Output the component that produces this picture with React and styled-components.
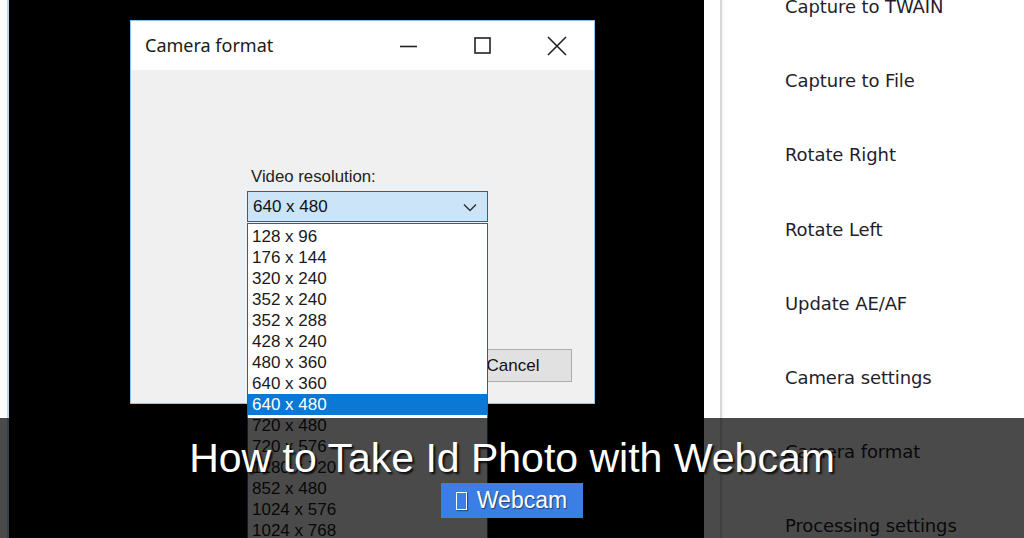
import React from 'react';
import styled, { createGlobalStyle } from 'styled-components';

const GlobalStyle = createGlobalStyle`
  html, body {
    margin: 0;
    padding: 0;
    background: #000;
    overflow: hidden;
  }
`;

const Screen = styled.div`
  position: relative;
  width: 1024px;
  height: 538px;
  display: flex;
  overflow: hidden;
  background: #000;
`;

const LeftEdge = styled.div`
  width: 7px;
  background: #fff;
  border-right: 2px solid #b9d6f0;
  flex-shrink: 0;
`;

const Stage = styled.div`
  flex: 1;
  background: #000;
  padding: 20px 0 0 121px;
`;

const Dialog = styled.div`
  position: relative;
  width: 463px;
  height: 382px;
  border: 1px solid #8fc3ea;
  background: #f0f0f0;
  display: flex;
  flex-direction: column;
`;

const TitleBar = styled.div`
  height: 49px;
  background: #fff;
  display: flex;
  align-items: center;
  padding-left: 14px;
  font-family: 'Noto Sans', 'Open Sans', sans-serif;
  font-size: 18px;
  color: #1a1a1a;
`;

const TitleText = styled.div`
  flex: 1;
  padding-bottom: 2px;
`;

const Controls = styled.div`
  display: flex;
  height: 100%;
`;

const ControlButton = styled.div`
  width: 74px;
  height: 100%;
  display: flex;
  align-items: center;
  justify-content: center;
`;

const Body = styled.div`
  flex: 1;
  padding: 97px 0 0 116px;
  position: relative;
`;

const Label = styled.div`
  font-family: 'Liberation Sans', Arial, sans-serif;
  font-size: 16.8px;
  color: #222;
  padding-left: 4px;
  margin-bottom: 4px;
`;

const ComboWrap = styled.div`
  position: relative;
  width: 241px;
`;

const Combo = styled.div`
  height: 31px;
  box-sizing: border-box;
  border: 1px solid #0a6cb8;
  background: #cce4f7;
  display: flex;
  align-items: center;
  justify-content: space-between;
  padding: 1px 10px 0 5px;
  font-family: 'Liberation Sans', Arial, sans-serif;
  font-size: 17px;
  color: #111;
`;

const List = styled.div`
  position: absolute;
  top: 32px;
  left: 0;
  width: 241px;
  box-sizing: border-box;
  border: 1px solid #0a6cb8;
  border-bottom: none;
  background: #fff;
  padding-top: 2px;
  z-index: 2;
`;

const Option = styled.div`
  height: 21px;
  line-height: 22px;
  padding-left: 4px;
  font-family: 'Liberation Sans', Arial, sans-serif;
  font-size: 17px;
  color: ${p => (p.$selected ? '#fff' : '#1a1a1a')};
  background: ${p => (p.$selected ? '#0a78d4' : 'transparent')};
`;

const CancelButton = styled.div`
  position: absolute;
  left: 323px;
  top: 279px;
  width: 118px;
  height: 33px;
  box-sizing: border-box;
  border: 1px solid #adadad;
  background: #e1e1e1;
  display: flex;
  align-items: center;
  justify-content: center;
  font-family: 'Liberation Sans', Arial, sans-serif;
  font-size: 17px;
  color: #111;
`;

const SidePanel = styled.div`
  width: 320px;
  flex-shrink: 0;
  background: #fff;
  display: flex;
`;

const SideShadow = styled.div`
  width: 16px;
  border-right: 2px solid #d8d8d8;
  box-shadow: 1px 0 2px rgba(0, 0, 0, 0.06);
`;

const Menu = styled.div`
  flex: 1;
  margin-top: -30px;
  padding-left: 63px;
`;

const MenuItem = styled.div`
  height: 74.2px;
  line-height: 74px;
  font-family: 'DejaVu Sans', Tahoma, sans-serif;
  font-size: 18px;
  color: #241e2a;
  letter-spacing: -0.1px;
`;

const Caption = styled.div`
  position: absolute;
  left: 0;
  right: 0;
  bottom: 0;
  height: 120px;
  background: rgba(0, 0, 0, 0.71);
  display: flex;
  flex-direction: column;
  align-items: center;
  padding-top: 17px;
  box-sizing: border-box;
  z-index: 5;
`;

const Headline = styled.div`
  font-family: 'Liberation Sans', Arial, sans-serif;
  font-size: 41px;
  line-height: 46px;
  color: #fff;
  text-shadow: 2px 2px 2px rgba(0, 0, 0, 0.85);
`;

const Tag = styled.div`
  margin-top: 2px;
  height: 35px;
  padding: 0 16px 0 15px;
  background: #3b7fe6;
  display: flex;
  align-items: center;
  gap: 10px;
  font-family: 'Liberation Sans', Arial, sans-serif;
  font-size: 23px;
  color: #fff;
  text-shadow: 1px 1px 1px rgba(0, 0, 0, 0.5);
`;

const TagIcon = styled.span`
  width: 9px;
  height: 16px;
  border: 1px solid #fff;
  box-shadow: 1px 1px 1px rgba(0, 0, 0, 0.4);
`;

const resolutions = [
  '128 x 96', '176 x 144', '320 x 240', '352 x 240', '352 x 288',
  '428 x 240', '480 x 360', '640 x 360', '640 x 480', '720 x 480',
  '720 x 576', '1280 x 720', '852 x 480', '1024 x 576', '1024 x 768',
];

const menuItems = [
  'Capture to TWAIN', 'Capture to File', 'Rotate Right', 'Rotate Left',
  'Update AE/AF', 'Camera settings', 'Camera format', 'Processing settings',
];

const Minimize = () => (
  <svg width="18" height="18" viewBox="0 0 18 18">
    <path d="M0 9.5h17" stroke="#222" strokeWidth="1.6" />
  </svg>
);

const Maximize = () => (
  <svg width="18" height="18" viewBox="0 0 18 18">
    <rect x="1" y="1" width="15" height="15" fill="none" stroke="#222" strokeWidth="1.6" />
  </svg>
);

const Close = () => (
  <svg width="20" height="20" viewBox="0 0 20 20">
    <path d="M1 1L19 19M19 1L1 19" stroke="#222" strokeWidth="1.6" />
  </svg>
);

const Chevron = () => (
  <svg width="14" height="9" viewBox="0 0 14 9">
    <path d="M1 1.5l6 6 6-6" fill="none" stroke="#333" strokeWidth="1.5" />
  </svg>
);

export default function App() {
  return (
    <>
      <GlobalStyle />
      <Screen>
        <LeftEdge />
        <Stage>
          <Dialog>
            <TitleBar>
              <TitleText>Camera format</TitleText>
              <Controls>
                <ControlButton><Minimize /></ControlButton>
                <ControlButton><Maximize /></ControlButton>
                <ControlButton><Close /></ControlButton>
              </Controls>
            </TitleBar>
            <Body>
              <CancelButton>Cancel</CancelButton>
              <Label>Video resolution:</Label>
              <ComboWrap>
                <Combo>
                  <span>640 x 480</span>
                  <Chevron />
                </Combo>
                <List>
                  {resolutions.map(r => (
                    <Option key={r} $selected={r === '640 x 480'}>{r}</Option>
                  ))}
                </List>
              </ComboWrap>
            </Body>
          </Dialog>
        </Stage>
        <SidePanel>
          <SideShadow />
          <Menu>
            {menuItems.map(m => (
              <MenuItem key={m}>{m}</MenuItem>
            ))}
          </Menu>
        </SidePanel>
        <Caption>
          <Headline>How to Take Id Photo with Webcam</Headline>
          <Tag>
            <TagIcon />
            Webcam
          </Tag>
        </Caption>
      </Screen>
    </>
  );
}
